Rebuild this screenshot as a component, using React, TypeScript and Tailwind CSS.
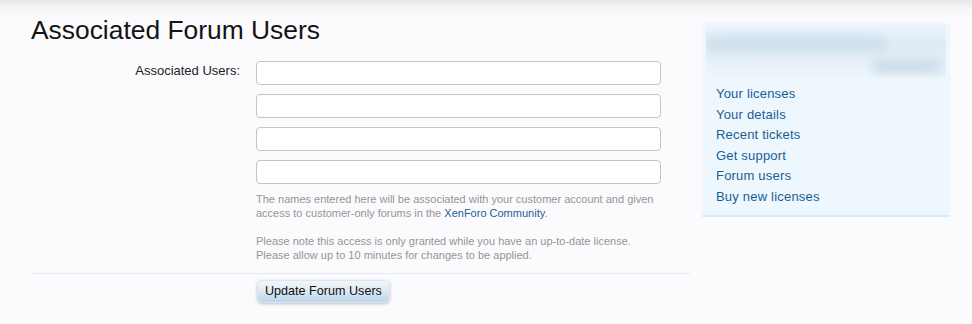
import React from "react";

const links = [
  "Your licenses",
  "Your details",
  "Recent tickets",
  "Get support",
  "Forum users",
  "Buy new licenses",
];

export default function App() {
  return (
    <div
      className="w-[972px] h-[324px] overflow-hidden bg-[#fbfbfe]"
      style={{ fontFamily: '"Liberation Sans", Arial, sans-serif' }}
    >
      <div className="h-[324px] bg-[linear-gradient(to_bottom,#e6e6e8_0px,#f5f5f7_8px,#fbfbfe_18px)] flex pl-[32px] pr-[22px]">
        {/* main */}
        <div className="w-[658px] flex flex-col">
          <h1 className="text-[26.4px] leading-[30px] text-[#141414] mt-[15px] ml-[-1px]">
            Associated Forum Users
          </h1>
          <div className="flex mt-[16px]">
            <div className="w-[208px] text-right text-[13px] text-[#222] pt-[0px]">
              Associated Users:
            </div>
            <div className="ml-[16px] flex flex-col">
              <div className="flex flex-col gap-[9px]">
                {[0, 1, 2, 3].map((i) => (
                  <div
                    key={i}
                    className="w-[405px] h-[24px] bg-white border border-[#c4c4c4] rounded-[4px]"
                  />
                ))}
              </div>
              <div className="mt-[8px] text-[11px] leading-[14px] text-[#959595] w-[410px]">
                <p>
                  The names entered here will be associated with your customer account and given
                  access to customer-only forums in the{" "}
                  <span className="text-[#176093]">XenForo Community</span>.
                </p>
                <p className="mt-[14px]">
                  Please note this access is only granted while you have an up-to-date license.
                  <br />
                  Please allow up to 10 minutes for changes to be applied.
                </p>
              </div>
            </div>
          </div>
          <div className="mt-[11px] h-px bg-[#dcebf8] w-[658px]" />
          <div className="ml-[225px] mt-[4px]">
            <div className="inline-flex items-center h-[23px] px-[7px] rounded-[5px] text-[12.6px] text-[#111] bg-[linear-gradient(to_bottom,#f2f7fb_0%,#dfeaf4_45%,#bcd5ea_100%)] shadow-[0_1px_3px_rgba(0,0,0,0.25)] border border-[#dbe6f0]">
              Update Forum Users
            </div>
          </div>
        </div>
        {/* sidebar */}
        <div className="ml-[12px] mt-[23px] w-[248px] h-[194px] bg-[#eef6fe] border-b-2 border-[#d6ebfb] flex flex-col">
          <div className="h-[55px] mx-[4px] relative overflow-hidden bg-[linear-gradient(to_bottom,#eef6fd_0%,#dfeaf4_40%,#e8f1f9_70%,#eef6fd_100%)]">
            <div className="absolute left-[0px] top-[15px] w-[180px] h-[12px] rounded-full bg-[#c9dbea] blur-[6px]" />
            <div className="absolute left-[165px] top-[38px] w-[72px] h-[10px] rounded-full bg-[#bfd3e4] blur-[6px]" />
          </div>
          <div className="flex flex-col pl-[14px] pt-[6px] text-[13px] leading-[20.6px] text-[#176093] tracking-[0.2px]">
            {links.map((l) => (
              <div key={l}>{l}</div>
            ))}
          </div>
        </div>
      </div>
    </div>
  );
}
